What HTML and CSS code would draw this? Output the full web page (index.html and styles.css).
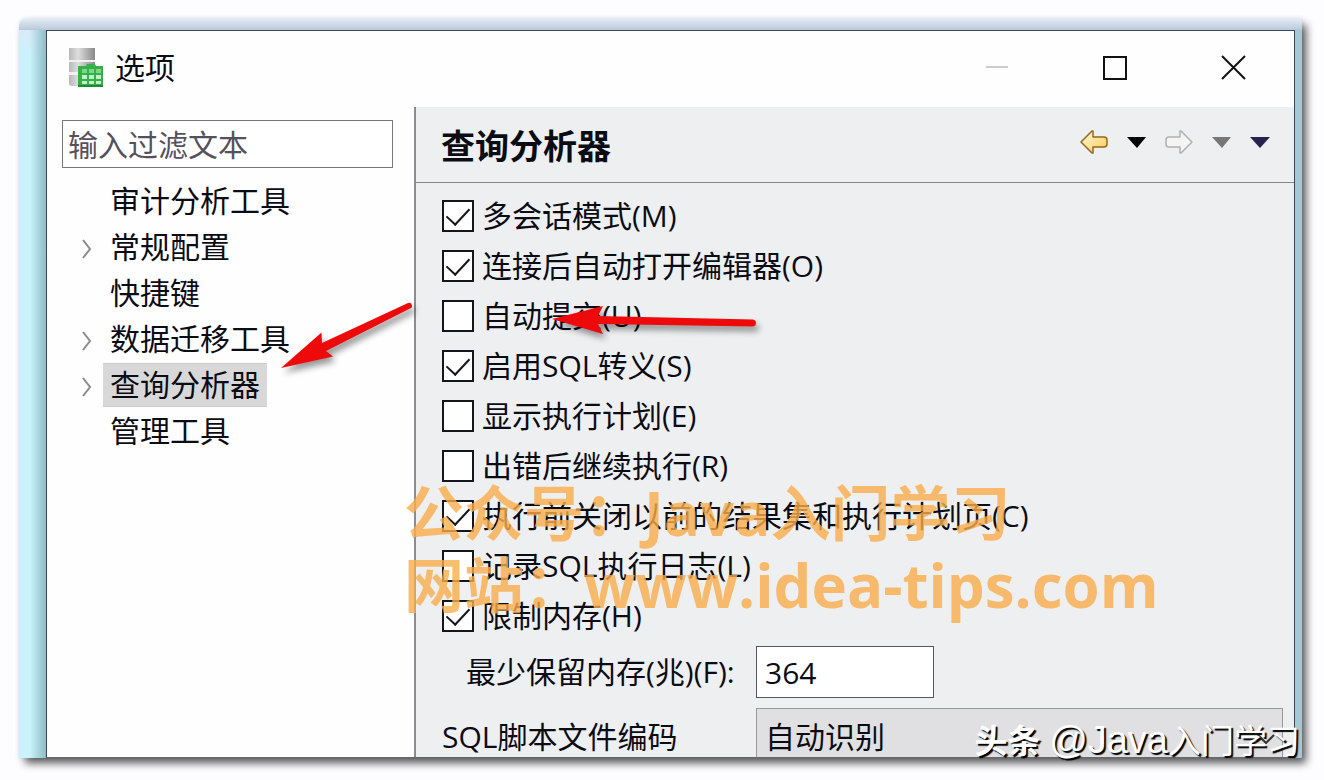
FILE: index.html
```html
<!DOCTYPE html>
<html lang="zh-CN">
<head>
<meta charset="utf-8">
<title>选项</title>
<link rel="stylesheet" href="styles.css">
</head>
<body>
<div class="backdrop">
  <div class="window">
    <header class="titlebar">
      <svg class="app-icon" width="36" height="40" viewBox="0 0 36 40" aria-hidden="true">
        <defs>
          <linearGradient id="metal" x1="0" y1="0" x2="1" y2="0">
            <stop offset="0" stop-color="#b8b8b8"/><stop offset=".35" stop-color="#dedede"/><stop offset="1" stop-color="#888"/>
          </linearGradient>
        </defs>
        <path d="M1 0h26v12H1z" fill="url(#metal)"/>
        <path d="M1 13h26v11H1z" fill="url(#metal)"/>
        <path d="M1 26h26v12H4q-3 0-3-3z" fill="url(#metal)"/>
        <path d="M1 12h26v2H1zM1 24h26v3H1z" fill="#f1f1f1"/>
        <path d="M19 16h8l1 2h7v21H10V18h8z" fill="#35b04a"/>
        <path d="M10 37h25v2H10z" fill="#218a38"/>
        <path d="M14 21h5v4h-5zM21 21h5v4h-5zM28 21h5v4h-5z" fill="#7bd888"/>
        <path d="M14 27h5v4h-5zM21 27h5v4h-5zM28 27h5v4h-5zM14 33h5v3h-5zM21 33h5v3h-5zM28 33h5v3h-5z" fill="#c2f3c6"/>
      </svg>
      <h1 class="window-title">选项</h1>
      <button class="caption-button" type="button" aria-label="最小化">
        <svg width="26" height="26" viewBox="0 0 26 26"><path d="M2 12h22" stroke="#bbb" stroke-width="1.5"/></svg>
      </button>
      <button class="caption-button" type="button" aria-label="最大化">
        <svg width="26" height="26" viewBox="0 0 26 26"><rect x="2" y="2" width="22" height="22" fill="none" stroke="#111" stroke-width="2"/></svg>
      </button>
      <button class="caption-button" type="button" aria-label="关闭">
        <svg width="26" height="26" viewBox="0 0 26 26"><path d="M2 1l23 23M25 1L2 24" stroke="#111" stroke-width="2"/></svg>
      </button>
    </header>
    <div class="content">
      <aside class="sidebar">
        <input class="filter" type="text" placeholder="输入过滤文本" aria-label="输入过滤文本">
        <ul class="tree">
          <li class="node"><span class="twisty"></span><span class="node-label">审计分析工具</span></li>
          <li class="node"><span class="twisty"><svg width="10" height="20" viewBox="0 0 10 20"><path d="M1 1l7 9-7 9" class="chevron"/></svg></span><span class="node-label">常规配置</span></li>
          <li class="node"><span class="twisty"></span><span class="node-label">快捷键</span></li>
          <li class="node"><span class="twisty"><svg width="10" height="20" viewBox="0 0 10 20"><path d="M1 1l7 9-7 9" class="chevron"/></svg></span><span class="node-label">数据迁移工具</span></li>
          <li class="node"><span class="twisty"><svg width="10" height="20" viewBox="0 0 10 20"><path d="M1 1l7 9-7 9" class="chevron"/></svg></span><span class="node-label selected">查询分析器</span></li>
          <li class="node"><span class="twisty"></span><span class="node-label">管理工具</span></li>
        </ul>
      </aside>
      <main class="page">
        <div class="page-header">
          <h2 class="page-title">查询分析器</h2>
          <div class="nav">
            <button class="nav-button" type="button" aria-label="后退">
              <svg width="28" height="24" viewBox="0 0 28 24">
                <defs><linearGradient id="gold" x1="0" y1="0" x2="1" y2="1"><stop offset="0" stop-color="#fffbe0"/><stop offset="1" stop-color="#fbc955"/></linearGradient></defs>
                <path d="M1 12L12 1h1v6h11q3 0 3 3v4q0 3-3 3H13v6h-1z" fill="url(#gold)" stroke="#946818" stroke-width="1.5" stroke-linejoin="round"/>
              </svg>
            </button>
            <button class="nav-button" type="button" aria-label="后退历史">
              <svg width="19" height="11" viewBox="0 0 19 11"><path d="M0 0h19l-9 11z" fill="#050505"/></svg>
            </button>
            <button class="nav-button" type="button" aria-label="前进">
              <svg width="28" height="24" viewBox="0 0 28 24">
                <path d="M27 12L16 1h-1v6H4q-3 0-3 3v4q0 3 3 3h11v6h1z" fill="#f4f4f2" stroke="#b0b0b0" stroke-width="1.5" stroke-linejoin="round"/>
              </svg>
            </button>
            <button class="nav-button" type="button" aria-label="前进历史">
              <svg width="19" height="11" viewBox="0 0 19 11"><path d="M0 0h19l-9 11z" fill="#777"/></svg>
            </button>
            <button class="nav-button" type="button" aria-label="菜单">
              <svg width="20" height="11" viewBox="0 0 20 11"><path d="M0 0h20l-10 11z" fill="#27234e"/></svg>
            </button>
          </div>
        </div>
        <form class="options">
          <label class="option"><input class="box" type="checkbox" checked>多会话模式(M)</label>
          <label class="option"><input class="box" type="checkbox" checked>连接后自动打开编辑器(O)</label>
          <label class="option"><input class="box" type="checkbox">自动提交(U)</label>
          <label class="option"><input class="box" type="checkbox" checked>启用SQL转义(S)</label>
          <label class="option"><input class="box" type="checkbox">显示执行计划(E)</label>
          <label class="option"><input class="box" type="checkbox">出错后继续执行(R)</label>
          <label class="option"><input class="box" type="checkbox" checked>执行前关闭以前的结果集和执行计划页(C)</label>
          <label class="option"><input class="box" type="checkbox">记录SQL执行日志(L)</label>
          <label class="option"><input class="box" type="checkbox" checked>限制内存(H)</label>
          <div class="fields">
            <label class="indented" for="memory">最少保留内存(兆)(F):</label>
            <input class="number" id="memory" type="text" value="364">
            <label for="encoding">SQL脚本文件编码</label>
            <div class="combo">
              <select class="combo-select" id="encoding"><option>自动识别</option></select>
              <svg class="combo-arrow" width="18" height="10" viewBox="0 0 18 10"><path d="M1 1l8 8 8-8" fill="none" stroke="#333" stroke-width="2"/></svg>
            </div>
          </div>
        </form>
      </main>
    </div>
  </div>
</div>

<svg class="annotation tree-arrow" width="150" height="90" viewBox="0 0 150 90" aria-hidden="true">
  <path d="M11 78L51.500 42.500L52 53L138 13Q142 12 142 17L141 18L56 61L63 66.500Z"/>
</svg>
<svg class="annotation option-arrow" width="230" height="50" viewBox="0 0 230 50" aria-hidden="true">
  <path d="M12 19L63 6L58 16L213 19.500Q216 20 216 23Q216 26 213 26.500L58 24L63 34Z"/>
</svg>
<div class="watermark">公众号：Java入门学习<br>网站：www.idea-tips.com</div>
<div class="signature"><strong>头条</strong> <span class="handle">@Java</span>入门学习</div>
</body>
</html>
```
FILE: styles.css
```css
* { box-sizing: border-box; }

body {
  position: relative;
  display: flex;
  height: 100vh;
  margin: 0;
  padding: 18px 22px 22px 19px;
  overflow: hidden;
  background: #fdfdff;
  color: #0c0c14;
  font-family: "Open Sans", "Noto Sans CJK SC", sans-serif;
  font-size: 30px;
  line-height: 40px;
}

button, input, select { font: inherit; color: inherit; }

.backdrop {
  display: flex;
  flex: 1;
  padding: 12px 7px 0 27px;
  border-radius: 8px 0 0 0;
  background:
    linear-gradient(to bottom, #e6edf8, #b9c9da) top / 100% 12px no-repeat,
    linear-gradient(to right, transparent 40%, #8fbcc6) left / 27px 100% no-repeat,
    linear-gradient(to right, transparent 50%, #a5c8d4 50%) top / 100% 100% no-repeat,
    linear-gradient(to bottom, #dfe6f8, #c8f3fa 40px);
  box-shadow: 5px 6px 9px -1px #555, 0 0 4px #e4eaf2;
}

.window {
  display: flex;
  flex: 1;
  flex-direction: column;
  min-width: 0;
  overflow: hidden;
  border: 1px solid #3f4658;
  border-bottom-color: #666;
  background: #fefeff;
}

.titlebar {
  display: flex;
  flex: none;
  align-items: center;
  height: 76px;
  padding: 0 2px 2px 21px;
}

.window-title {
  flex: 1;
  margin: 0 0 0 11px;
  font-size: 30px;
  font-weight: 400;
}

.caption-button {
  display: grid;
  place-items: center;
  width: 118px;
  height: 74px;
  padding: 0;
  border: 0;
  background: none;
}

.content {
  display: flex;
  flex: 1;
  min-height: 0;
}

.sidebar {
  flex: none;
  width: 369px;
  padding: 13px 21px 0 15px;
  border-right: 2px solid #8b8b92;
}

.filter {
  display: block;
  width: 100%;
  height: 48px;
  padding: 0 5px;
  border: 1px solid #77777f;
  background: #fff;
}

.filter::placeholder { color: #57505c; opacity: 1; }

.tree {
  margin: 10px 0 0;
  padding: 0;
  list-style: none;
}

.node {
  display: flex;
  align-items: center;
  height: 46px;
}

.twisty {
  display: grid;
  place-items: center;
  width: 41px;
  padding: 4px 0 0 8px;
}

.chevron { fill: none; stroke: #8a8a8a; stroke-width: 2; }

.node-label {
  height: 44px;
  padding: 0 7px;
  line-height: 42px;
  border: 1px solid transparent;
  border-width: 1px 0;
}

.selected { border-color: #cbcbcb; background: #d8d8d9; }

.page {
  flex: 1;
  min-width: 0;
  overflow: hidden;
  background: #eeeff1;
}

.page-header {
  display: flex;
  align-items: center;
  justify-content: space-between;
  height: 76px;
  padding: 0 24px 0 25px;
  border-bottom: 1px solid #85858a;
}

.page-title { margin: 2px 0 0; font-size: 34px; }

.nav { display: flex; align-items: center; gap: 19px; padding-bottom: 5px; }

.nav-button {
  display: flex;
  padding: 0;
  border: 0;
  background: none;
}

.options { padding: 8px 11px 0 26px; }

.option {
  display: flex;
  align-items: center;
  gap: 8px;
  height: 50px;
  white-space: nowrap;
}

.box {
  display: grid;
  place-items: center;
  width: 32px;
  height: 32px;
  margin: 0;
  appearance: none;
  border: 2px solid #15151c;
  background: #fff;
}

.box:checked::before {
  width: 20px;
  height: 11px;
  margin-bottom: 6px;
  border: solid #15151c;
  border-width: 0 0 2px 2px;
  content: "";
  transform: rotate(-47deg);
}

.fields {
  display: grid;
  grid-template-columns: 314px 1fr;
  gap: 10px 0;
  align-items: center;
  padding-top: 5px;
}

.indented { padding-left: 24px; }

.number {
  width: 178px;
  height: 52px;
  padding: 0 8px;
  border: 1px solid #55555c;
  background: #fff;
}

.combo { position: relative; }

.combo-select {
  display: block;
  width: 100%;
  height: 58px;
  padding: 0 8px;
  appearance: none;
  border: 1px solid #99999d;
  border-radius: 0;
  background: #e0e0e2;
}

.combo-arrow { position: absolute; top: 26px; right: 8px; }

.annotation {
  position: absolute;
  fill: #ee0a0a;
  filter: drop-shadow(3px 5px 3px #0006);
  pointer-events: none;
}

.tree-arrow { top: 290px; left: 270px; }

.option-arrow { top: 300px; left: 540px; }

.watermark {
  position: absolute;
  top: 477px;
  left: 404px;
  color: #faae4c;
  font-size: 60px;
  font-weight: 700;
  line-height: 72px;
  white-space: nowrap;
  opacity: .8;
  pointer-events: none;
}

.signature {
  position: absolute;
  right: 24px;
  bottom: 19px;
  color: #fff;
  font-size: 33px;
  text-shadow: 2px 2px 1px #000;
  white-space: nowrap;
  pointer-events: none;
}

.handle { font-family: "Liberation Sans", sans-serif; font-size: 38px; }
```
